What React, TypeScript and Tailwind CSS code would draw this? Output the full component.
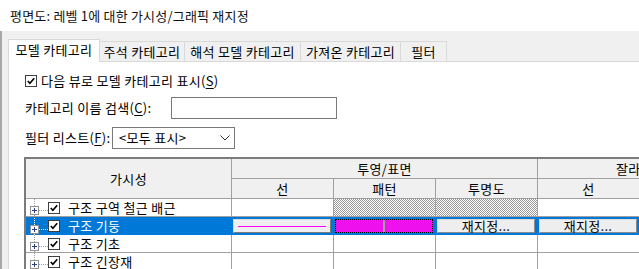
import type { ReactNode } from "react";

const FONT = "font-['Malgun_Gothic','Noto_Sans_CJK_KR',sans-serif]";

const TABS = [
  { label: "모델 카테고리", w: "w-[92px]", active: true },
  { label: "주석 카테고리", w: "w-[85px]" },
  { label: "해석 모델 카테고리", w: "w-[116px]" },
  { label: "가져온 카테고리", w: "w-[100px]" },
  { label: "필터", w: "w-[46px]" },
];

const ROWS = [
  { name: "구조 구역 철근 배근", hatch: true },
  { name: "구조 기둥", selected: true },
  { name: "구조 기초" },
  { name: "구조 긴장재" },
];

const HATCH = "bg-[conic-gradient(#9a9a9a_25%,#ffffff_0_50%,#9a9a9a_0_75%,#ffffff_0)] bg-[length:2px_2px]";

function Check({ size = 13 }: { size?: number }) {
  return (
    <svg width={size} height={size} viewBox="0 0 13 13" className="shrink-0">
      <rect x="0.5" y="0.5" width="12" height="12" fill="#fff" stroke="#333" />
      <path d="M3 6.5 L5.3 9 L10 3.5" fill="none" stroke="#000" strokeWidth="1.8" />
    </svg>
  );
}

function TreeStub({ selected }: { selected?: boolean }) {
  const dot = selected ? "#ffffff" : "#a0a0a0";
  return (
    <svg width="22" height="17" viewBox="0 0 22 17" className="shrink-0">
      <line x1="8.5" y1="0" x2="8.5" y2="17" stroke={dot} strokeDasharray="1 1" />
      <line x1="13" y1="11.5" x2="22" y2="11.5" stroke={dot} strokeDasharray="1 1" />
      <rect x="4.5" y="7.5" width="8" height="8" fill="#fff" stroke="#919191" />
      <line x1="6" y1="11.5" x2="11" y2="11.5" stroke="#2b3f86" />
      <line x1="8.5" y1="9" x2="8.5" y2="14" stroke="#2b3f86" />
    </svg>
  );
}

function Under({ children }: { children: ReactNode }) {
  return <span className="underline underline-offset-2">{children}</span>;
}

function Hd({ children, className = "" }: { children?: ReactNode; className?: string }) {
  return (
    <div
      className={`flex items-center justify-center bg-[#f0f0f0] border-r border-b border-[#a0a0a0] whitespace-nowrap overflow-hidden ${className}`}
    >
      {children}
    </div>
  );
}

function ResetBtn() {
  return (
    <div className="h-full flex items-center justify-center bg-[#eeeeee] border border-[#dcdcdc] border-r-[#8a8a8a] border-b-[#8a8a8a] leading-[12px]">
      재지정...
    </div>
  );
}

export default function App() {
  return (
    <div
      className={`w-[639px] h-[269px] overflow-hidden bg-white flex flex-col text-[13px] leading-[16px] tracking-[0.3px] text-black ${FONT}`}
    >
      {/* title */}
      <div className="h-[31px] shrink-0 flex items-center pl-[10px] tracking-[0.2px] text-[#111]">
        평면도: 레벨 1에 대한 가시성/그래픽 재지정
      </div>

      <div className="flex-1 min-h-0 flex bg-[#f0f0f0]">
        <div className="w-[8px] shrink-0 flex">
          <div className="w-[2px] bg-[#a8a8a8]" />
        </div>

        <div className="flex-1 min-w-0 flex flex-col">
          {/* tabs */}
          <div className="h-[30px] shrink-0 flex items-end">
            {TABS.map((t) =>
              t.active ? (
                <div
                  key={t.label}
                  className={`${t.w} h-[23px] -mb-px relative z-10 flex items-center justify-center bg-white border border-b-0 border-[#d9d9d9] pb-[2px] whitespace-nowrap`}
                >
                  {t.label}
                </div>
              ) : (
                <div
                  key={t.label}
                  className={`${t.w} h-[20px] flex items-center justify-center border-t border-r border-[#d9d9d9] whitespace-nowrap`}
                >
                  {t.label}
                </div>
              )
            )}
          </div>

          {/* panel */}
          <div className="flex-1 min-h-0 bg-white border-t border-l border-[#d9d9d9] pl-[16px] pt-[11px] flex flex-col overflow-hidden">
            <div className="h-[16px] flex items-center gap-[4px]">
              <Check size={12} />
              <span>
                다음 뷰로 모델 카테고리 표시(<Under>S</Under>)
              </span>
            </div>

            <div className="mt-[8px] h-[22px] flex items-center">
              <span className="w-[146px] shrink-0 whitespace-nowrap">
                카테고리 이름 검색(<Under>C</Under>):
              </span>
              <div className="w-[166px] h-[22px] border border-[#7a7a7a] bg-white" />
            </div>

            <div className="mt-[8px] h-[22px] flex items-center">
              <span className="w-[87px] shrink-0 whitespace-nowrap">
                필터 리스트(<Under>F</Under>):
              </span>
              <div className="w-[123px] h-[22px] border border-[#7a7a7a] bg-white flex items-center pl-[6px] pr-[4px]">
                <span className="flex-1 whitespace-nowrap">&lt;모두 표시&gt;</span>
                <svg width="10" height="6" viewBox="0 0 10 6">
                  <path d="M0.5 0.5 L5 5 L9.5 0.5" fill="none" stroke="#333" />
                </svg>
              </div>
            </div>

            {/* grid */}
            <div className="mt-[8px] -ml-[1px] w-[760px] border-t-2 border-l-2 border-[#7c7c7c] grid grid-cols-[206px_102px_102px_102px_102px_146px] grid-rows-[20px_20px_18px_18px_18px_18px]">
              <Hd className="row-span-2">가시성</Hd>
              <Hd className="col-span-3">투영/표면</Hd>
              <Hd className="col-span-2 justify-start pl-[78px]">잘라내기</Hd>
              <Hd>선</Hd>
              <Hd>패턴</Hd>
              <Hd>투명도</Hd>
              <Hd>선</Hd>
              <Hd>패턴</Hd>

              {ROWS.map((r) =>
                r.selected ? (
                  <div key={r.name} className="col-span-6 grid grid-cols-subgrid bg-[#0078d7] text-white leading-[14px]">
                    <div className="flex items-center">
                      <TreeStub selected />
                      <Check size={12} />
                      <span className="ml-[8px] whitespace-nowrap">{r.name}</span>
                    </div>
                    <div className="p-[2px] pl-[1px] pr-[3px]">
                      <div className="h-full flex items-center px-[4px] bg-[#efefef] border border-[#dcdcdc] border-r-[#7a7a7a] border-b-[#7a7a7a]">
                        <div className="flex-1 h-px bg-[#ff00ff]" />
                      </div>
                    </div>
                    <div className="p-[2px] pl-[1px] pr-[3px]">
                      <div className="h-full flex border border-dotted border-black bg-[#ee11ee]">
                        <div className="flex-1" />
                        <div className="w-[2px] bg-[#a0a0a0]" />
                        <div className="flex-1" />
                      </div>
                    </div>
                    <div className="p-[2px] pl-[1px] pr-[3px] text-black">
                      <ResetBtn />
                    </div>
                    <div className="p-[2px] pl-[1px] pr-[3px] text-black">
                      <ResetBtn />
                    </div>
                    <div />
                  </div>
                ) : (
                  <div key={r.name} className="col-span-6 grid grid-cols-subgrid leading-[14px]">
                    <div className="flex items-center border-r border-b border-[#a0a0a0]">
                      <TreeStub />
                      <Check size={12} />
                      <span className="ml-[8px] whitespace-nowrap">{r.name}</span>
                    </div>
                    <div className="border-r border-b border-[#a0a0a0]" />
                    <div className={`border-r border-b border-[#a0a0a0] ${r.hatch ? HATCH : ""}`} />
                    <div className={`border-r border-b border-[#a0a0a0] ${r.hatch ? HATCH : ""}`} />
                    <div className="border-r border-b border-[#a0a0a0]" />
                    <div className="border-r border-b border-[#a0a0a0]" />
                  </div>
                )
              )}
            </div>
          </div>
        </div>
      </div>
    </div>
  );
}
